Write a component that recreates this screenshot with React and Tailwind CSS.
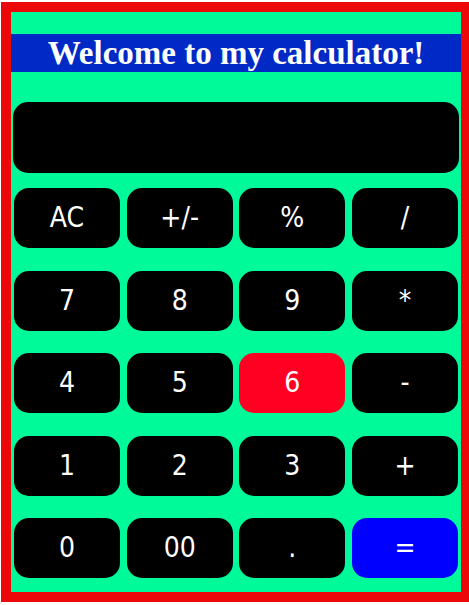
import React, { useState } from 'react';

const keys = [
  'AC', '+/-', '%', '/',
  '7', '8', '9', '*',
  '4', '5', '6', '-',
  '1', '2', '3', '+',
  '0', '00', '.', '=',
];

const App = () => {
  const [display, setDisplay] = useState('');

  const press = (k) => {
    if (k === 'AC') return setDisplay('');
    if (k === '=') {
      try {
        // eslint-disable-next-line no-eval
        setDisplay(String(eval(display)));
      } catch (e) {
        setDisplay('Error');
      }
      return;
    }
    setDisplay(display + k);
  };

  const keyColor = (k) => {
    if (k === '6') return 'bg-[#ff0022]';
    if (k === '=') return 'bg-[#0000ff]';
    return 'bg-black';
  };

  return (
    <div className="pt-[2px] pl-[1px] bg-white min-h-screen overflow-hidden">
      <div className="w-[470px] border-[10px] border-[#ec0808] bg-[#00fa9a] pb-[14px]">
        <h1
          className="mt-[22px] h-[38px] bg-[#0029c6] text-center text-white font-bold text-[33px] leading-[38px]"
          style={{ fontFamily: '"Liberation Serif", "Times New Roman", serif' }}
        >
          Welcome to my calculator!
        </h1>

        <div className="mt-[30px] mx-[2px] h-[71px] rounded-[15px] bg-black text-white text-right px-4 text-[32px] leading-[71px] overflow-hidden">
          {display}
        </div>

        <div
          className="mt-[15px] px-[3px] grid grid-cols-4 gap-x-[6.67px] gap-y-[22.5px]"
          style={{ fontFamily: '"DejaVu Sans Condensed", "DejaVu Sans", Tahoma, sans-serif' }}
        >
          {keys.map((k) => (
            <button
              key={k}
              onClick={() => press(k)}
              className={`${keyColor(k)} h-[60px] rounded-[15px] text-white text-[28px] leading-none flex items-center justify-center`}
            >
              {k}
            </button>
          ))}
        </div>
      </div>
    </div>
  );
};

export default App;
